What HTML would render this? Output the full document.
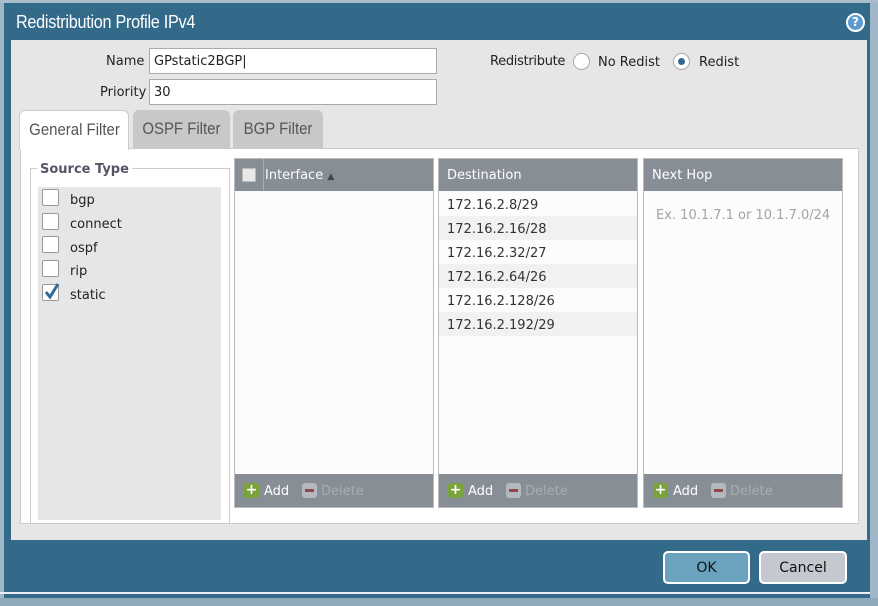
<!DOCTYPE html>
<html><head><style>
*{box-sizing:border-box;margin:0;padding:0}
body{width:878px;height:606px;overflow:hidden;background:#9fb6c8;font-family:"DejaVu Sans","Liberation Sans",sans-serif;font-size:13px;color:#222;position:relative}
.a{position:absolute}
.dlg{left:4px;top:3px;width:866px;height:595px;background:#336a89}
.title{left:16px;top:12px;color:#fff;font-family:"Liberation Sans",sans-serif;font-size:18px;letter-spacing:-0.3px;transform:scaleX(0.9);transform-origin:left}
.body{left:11px;top:40px;width:856px;height:500px;background:#e6e6e6}
.lbl{font-size:13px;color:#222}
.inp{background:#fff;border:1px solid #aaa;height:26px;padding:5px 4px 3px;font-size:13px}
.tab{top:110px;height:38px;border-radius:6px 6px 0 0;background:#c8c8c8;color:#555;font-family:"Liberation Sans",sans-serif;font-size:17px;text-align:center;line-height:38px}
.tab span{display:inline-block;transform:scaleX(0.88)}
.panel{left:20px;top:148px;width:839px;height:376px;background:#fff;border:1px solid #ccc}
.col{top:158px;width:200px;height:350px;border:1px solid #bbb;background:#fcfcfc}
.hd{left:0;top:0;width:100%;height:32px;background:#878e96;color:#fff;line-height:34px;padding-left:8px;font-size:13px}
.ft{left:0;bottom:0;width:100%;height:33px;background:#878e96}
.row{height:24px;line-height:27px;padding-left:8px;font-size:13px;color:#333;width:198px}
.cb{width:17px;height:17px;border:1px solid #999;background:#fff;border-radius:2px}
.btn{top:551px;height:33px;border:2px solid #fff;border-radius:5px;text-align:center;line-height:31px;font-size:14px;color:#111}
.ic{width:15px;height:15px;border-radius:3px;top:9px}
.ft .t{top:10px}
</style></head><body>
<div class="a dlg"></div>
<div class="a" style="left:0;top:0;width:878px;height:3px;background:#a9bccb"></div>
<div class="a title">Redistribution Profile IPv4</div>
<div class="a" style="left:846px;top:13px;width:19px;height:19px;border-radius:50%;background:#5b9bd0;border:2px solid #fff;color:#fff;font-size:12px;font-weight:bold;text-align:center;line-height:15px">?</div>
<div class="a body"></div>
<div class="a lbl" style="left:106px;top:54px">Name</div>
<div class="a inp" style="left:149px;top:48px;width:288px">GPstatic2BGP|</div>
<div class="a lbl" style="left:100px;top:85px">Priority</div>
<div class="a inp" style="left:149px;top:79px;width:288px">30</div>
<div class="a lbl" style="left:490px;top:54px;letter-spacing:-0.3px">Redistribute</div>
<div class="a" style="left:573px;top:53px;width:17px;height:17px;border-radius:50%;background:#fff;border:1px solid #aaa"></div>
<div class="a lbl" style="left:598px;top:55px">No Redist</div>
<div class="a" style="left:673px;top:53px;width:17px;height:17px;border-radius:50%;background:#fff;border:1px solid #aaa"></div>
<div class="a" style="left:678px;top:58px;width:7px;height:7px;border-radius:50%;background:#2f6a8c"></div>
<div class="a lbl" style="left:699px;top:55px">Redist</div>
<div class="a panel"></div>
<div class="a tab" style="left:19px;width:110px;background:#fff;height:40px;border:1px solid #ccc;border-bottom:none"><span>General Filter</span></div>
<div class="a tab" style="left:133px;width:97px"><span>OSPF Filter</span></div>
<div class="a tab" style="left:233px;width:90px"><span>BGP Filter</span></div>
<div class="a" style="left:30px;top:168px;width:200px;height:355px;border:1px solid #ccc;border-bottom:none"></div>
<div class="a" style="left:37px;top:162px;background:#fff;padding:0 3px;font-weight:bold;color:#556;font-size:13px">Source Type</div>
<div class="a" style="left:38px;top:187px;width:183px;height:333px;background:#e6e6e6"></div>
<div class="a cb" style="left:42px;top:189px"></div><div class="a lbl" style="left:70px;top:193px">bgp</div>
<div class="a cb" style="left:42px;top:213px"></div><div class="a lbl" style="left:70px;top:217px">connect</div>
<div class="a cb" style="left:42px;top:236px"></div><div class="a lbl" style="left:70px;top:241px">ospf</div>
<div class="a cb" style="left:42px;top:260px"></div><div class="a lbl" style="left:70px;top:264px">rip</div>
<div class="a cb" style="left:42px;top:284px"></div>
<svg class="a" style="left:42px;top:281px" width="20" height="20"><path d="M4 11 L8 16 L16 3" stroke="#2f6a9c" stroke-width="3" fill="none"/></svg>
<div class="a lbl" style="left:70px;top:288px">static</div>

<div class="a col" style="left:234px">
<div class="a hd" style="padding-left:30px">Interface <span style="font-size:9px;color:#444">▲</span></div>
<div class="a" style="left:7px;top:9px;width:14px;height:14px;background:#e8e8e8;border:1px solid #bbb"></div>
<div class="a" style="left:28px;top:0;width:1px;height:32px;background:#aab"></div>
<div class="a ft"><div class="a ic" style="left:9px;background:#7aa33a;color:#fff;font-weight:bold;font-size:14px;line-height:14px;text-align:center">+</div><div class="a t" style="left:29px;color:#fff">Add</div><div class="a ic" style="left:67px;background:#b5b9bf"><div class="a" style="left:3px;top:6px;width:9px;height:3px;background:#8a4a4a"></div></div><div class="a t" style="left:86px;color:#a9adb3">Delete</div></div>
</div>
<div class="a col" style="left:438px">
<div class="a hd">Destination</div>
<div class="a" style="left:0;top:33px">
<div class="row">172.16.2.8/29</div><div class="row" style="background:#f1f1f1">172.16.2.16/28</div><div class="row">172.16.2.32/27</div><div class="row" style="background:#f1f1f1">172.16.2.64/26</div><div class="row">172.16.2.128/26</div><div class="row" style="background:#f1f1f1">172.16.2.192/29</div>
</div>
<div class="a ft"><div class="a ic" style="left:9px;background:#7aa33a;color:#fff;font-weight:bold;font-size:14px;line-height:14px;text-align:center">+</div><div class="a t" style="left:29px;color:#fff">Add</div><div class="a ic" style="left:67px;background:#b5b9bf"><div class="a" style="left:3px;top:6px;width:9px;height:3px;background:#8a4a4a"></div></div><div class="a t" style="left:86px;color:#a9adb3">Delete</div></div>
</div>
<div class="a col" style="left:643px">
<div class="a hd">Next Hop</div>
<div class="a" style="left:12px;top:49px;color:#a0a4aa;font-size:13px">Ex. 10.1.7.1 or 10.1.7.0/24</div>
<div class="a ft"><div class="a ic" style="left:9px;background:#7aa33a;color:#fff;font-weight:bold;font-size:14px;line-height:14px;text-align:center">+</div><div class="a t" style="left:29px;color:#fff">Add</div><div class="a ic" style="left:67px;background:#b5b9bf"><div class="a" style="left:3px;top:6px;width:9px;height:3px;background:#8a4a4a"></div></div><div class="a t" style="left:86px;color:#a9adb3">Delete</div></div>
</div>
<div class="a btn" style="left:663px;width:87px;background:#6ba3be">OK</div>
<div class="a btn" style="left:759px;width:88px;background:#c5c8cf">Cancel</div>
<div class="a" style="left:0;top:592px;width:870px;height:2px;background:#e8eef2"></div>
<div class="a" style="left:0;top:598px;width:878px;height:8px;background:#8fa9bb"></div>
</body></html>
